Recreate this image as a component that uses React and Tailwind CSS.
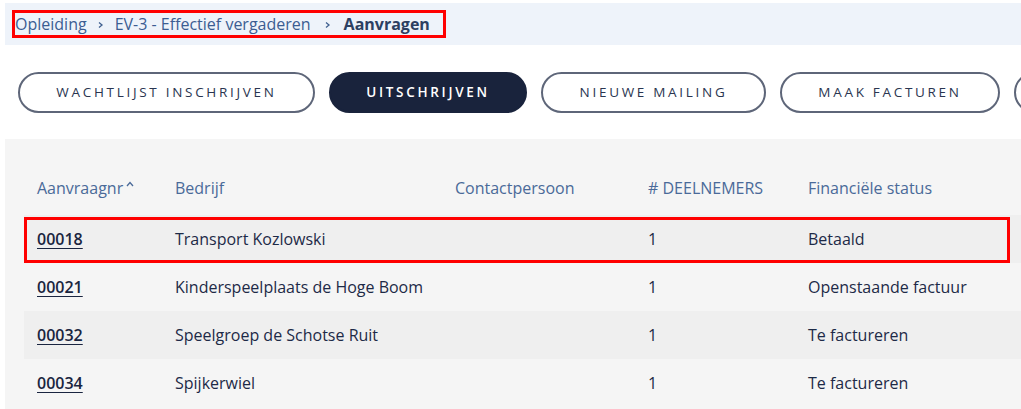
import React from "react";

const font = { fontFamily: '"Open Sans", "Noto Sans", sans-serif' };

function Chevron() {
  return (
    <svg width="8" height="10" viewBox="0 0 8 10" className="mx-[10px] mt-[1px]">
      <path d="M2 2.5 L5 5 L2 7.5" fill="none" stroke="#3f5f8f" strokeWidth="1.3" />
    </svg>
  );
}

function Btn({ children, dark, w }) {
  return (
    <button
      className={
        "shrink-0 h-[41px] rounded-full border-2 flex items-center justify-center text-[13.5px] tracking-[2.7px] uppercase " +
        w +
        (dark
          ? " bg-[#19233c] border-[#19233c] text-white font-semibold"
          : " bg-white border-[#5e6679] text-[#2a3550]")
      }
    >
      {children}
    </button>
  );
}

const rows = [
  ["00018", "Transport Kozlowski", "", "1", "Betaald"],
  ["00021", "Kinderspeelplaats de Hoge Boom", "", "1", "Openstaande factuur"],
  ["00032", "Speelgroep de Schotse Ruit", "", "1", "Te factureren"],
  ["00034", "Spijkerwiel", "", "1", "Te factureren"],
];

const grid = "grid grid-cols-[138px_280px_193px_160px_1fr]";

export default function App() {
  return (
    <div className="w-full h-[409px] overflow-hidden bg-white pl-[5px] pt-[3px]" style={font}>
      <div className="h-[42px] bg-[#eef3fa] flex items-center pl-[7px]">
        <div className="h-[28px] border-[3px] border-[#ff0000] flex items-center pr-[13px] text-[16px] text-[#3b5d92]">
          <span>Opleiding</span>
          <Chevron />
          <span>EV-3 - Effectief vergaderen</span>
          <span className="ml-[3px] flex"><Chevron /></span>
          <span className="font-bold text-[#2c3f62] ml-[2px]">Aanvragen</span>
        </div>
      </div>

      <div className="mt-[27px] ml-[13px] flex gap-[14px] whitespace-nowrap">
        <Btn w="w-[297px]">Wachtlijst inschrijven</Btn>
        <Btn dark w="w-[198px]">Uitschrijven</Btn>
        <Btn w="w-[225px]">Nieuwe mailing</Btn>
        <Btn w="w-[220px]">Maak facturen</Btn>
        <Btn w="w-[200px]"></Btn>
      </div>

      <div className="mt-[26px] bg-[#f5f5f5] h-[300px] pt-[26px] pl-[19px]">
        <div className={grid + " h-[50px] pb-[4px] items-center text-[16px] text-[#4a6a99]"}>
          <div className="pl-[13px] flex items-center">
            Aanvraagnr
            <svg width="10" height="8" viewBox="0 0 10 8" className="ml-[2px] -mt-[8px]">
              <path d="M2 6 L5 2.5 L8 6" fill="none" stroke="#4a6a99" strokeWidth="1.3" />
            </svg>
          </div>
          <div className="pl-[13px]">Bedrijf</div>
          <div className="pl-[13px]">Contactpersoon</div>
          <div className="pl-[13px]">#&nbsp;DEELNEMERS</div>
          <div className="pl-[13px]">Financiële status</div>
        </div>
        {rows.map((r, i) => (
          <div
            key={r[0]}
            className={
              grid +
              " relative h-[48px] items-center text-[16px] text-[#1d2a47] " +
              (i % 2 === 0 ? "bg-[#efefef]" : "")
            }
          >
            <div className="pl-[13px]">
              <a className="font-semibold underline underline-offset-[3px] text-[#1a2540]">{r[0]}</a>
            </div>
            <div className="pl-[13px]">{r[1]}</div>
            <div className="pl-[13px]">{r[2]}</div>
            <div className="pl-[13px]">{r[3]}</div>
            <div className="pl-[13px]">{r[4]}</div>
            {i === 0 && (
              <div className="absolute left-0 top-[2px] w-[986px] h-[46px] border-[3px] border-[#ff0000] pointer-events-none" />
            )}
          </div>
        ))}
      </div>
    </div>
  );
}
